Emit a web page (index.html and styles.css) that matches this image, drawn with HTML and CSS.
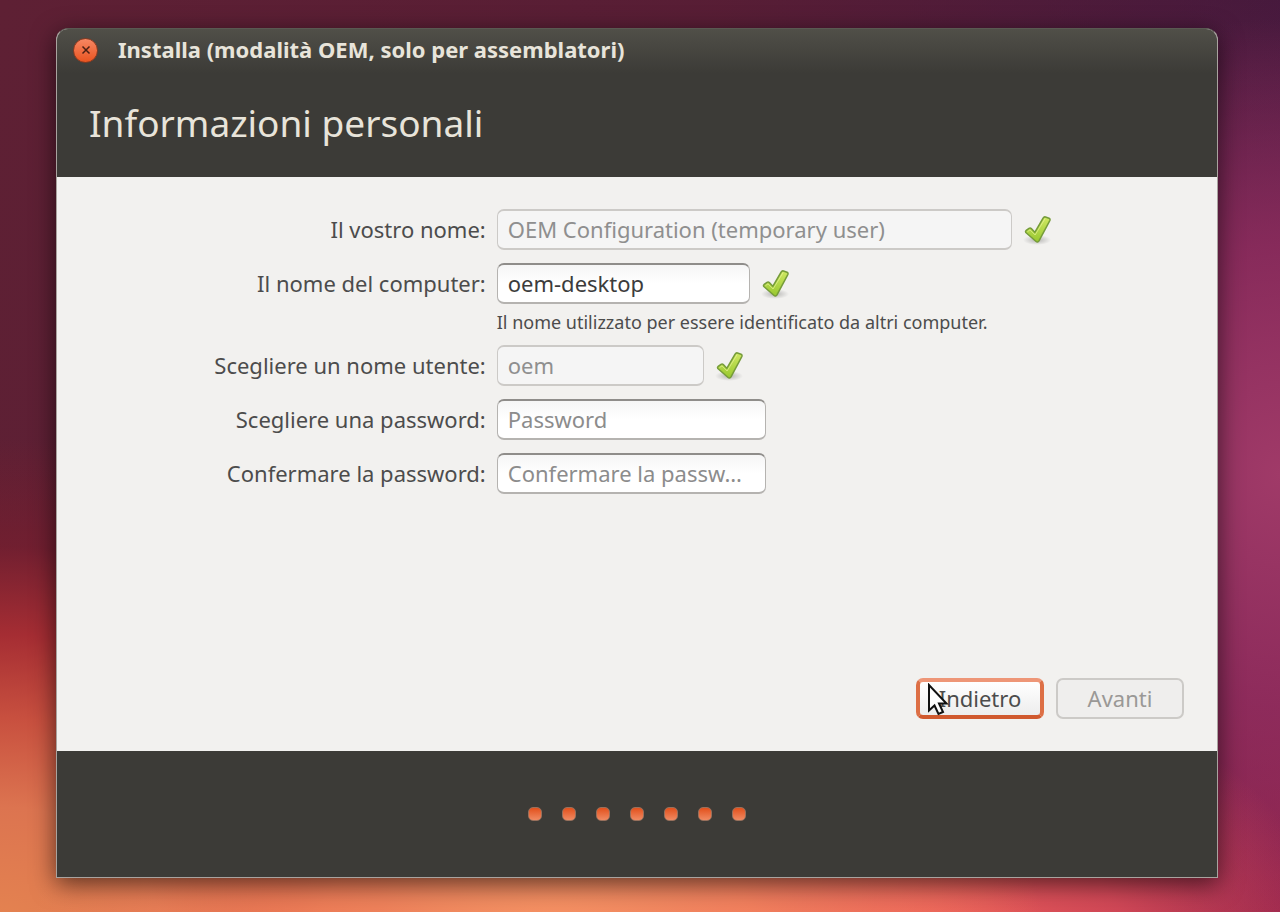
FILE: index.html
```html
<!DOCTYPE html>
<html lang="it">
<head>
    <meta charset="UTF-8">
    <meta name="viewport" content="width=device-width, initial-scale=1.0">
    <title>Installa</title>
    <link rel="stylesheet" href="styles.css">
</head>
<body>
    <!-- shared check mark -->
    <svg class="defs" width="0" height="0" aria-hidden="true">
        <defs>
            <linearGradient id="checkFill" x1="0" y1="0" x2="0" y2="1">
                <stop offset="0" stop-color="#d0e864"/>
                <stop offset="1" stop-color="#98c82e"/>
            </linearGradient>
            <radialGradient id="checkShadow">
                <stop offset="0" stop-color="#000" stop-opacity="0.25"/>
                <stop offset="1" stop-color="#000" stop-opacity="0"/>
            </radialGradient>
            <symbol id="check" viewBox="0 0 32 32">
                <ellipse cx="15" cy="26" rx="14" ry="5" fill="url(#checkShadow)"/>
                <path d="M3.800 18.500 Q3 17.300 4.200 16.300 L7 14.300 Q8.300 13.500 9.300 14.600 L12.800 18.300 L21.200 4 Q22 2.500 23.500 3 L27 4.300 Q28.600 5 27.800 6.600 L17 26.800 Q15.700 29 13.800 27.300 Z" fill="url(#checkFill)" stroke="#769c3a" stroke-width="1.500" stroke-linejoin="round"/>
                <path d="M5.500 17.600 L8 15.900 L13.100 21 L23 4.700" fill="none" stroke="#eef6a4" stroke-width="1" opacity="0.6"/>
            </symbol>
        </defs>
    </svg>

    <main class="window">
        <header class="window-header">
            <div class="titlebar">
                <button type="button" class="close-button" aria-label="Chiudi">
                    <svg width="10" height="10" viewBox="0 0 10 10">
                        <path d="M1.500 1.500 L8.500 8.500 M8.500 1.500 L1.500 8.500" stroke="#4b2014" stroke-width="1.500"/>
                    </svg>
                </button>
                <span class="window-title">Installa (modalità OEM, solo per assemblatori)</span>
            </div>
            <h1>Informazioni personali</h1>
        </header>

        <form class="content">
            <div class="fields">
                <label for="fullname">Il vostro nome:</label>
                <div class="field">
                    <input type="text" id="fullname" class="input-wide" value="OEM Configuration (temporary user)" disabled>
                    <svg class="check"><use href="#check"/></svg>
                </div>

                <label for="hostname">Il nome del computer:</label>
                <div class="field">
                    <input type="text" id="hostname" class="input-host" value="oem-desktop">
                    <svg class="check"><use href="#check"/></svg>
                    <p class="hint">Il nome utilizzato per essere identificato da altri computer.</p>
                </div>

                <label for="username">Scegliere un nome utente:</label>
                <div class="field">
                    <input type="text" id="username" class="input-user" value="oem" disabled>
                    <svg class="check"><use href="#check"/></svg>
                </div>

                <label for="password">Scegliere una password:</label>
                <div class="field">
                    <input type="password" id="password" class="input-password" placeholder="Password">
                </div>

                <label for="verify">Confermare la password:</label>
                <div class="field">
                    <input type="password" id="verify" class="input-password" placeholder="Confermare la passw…">
                </div>
            </div>

            <div class="actions">
                <button type="button" class="btn btn-focus">Indietro
                    <svg class="pointer" width="22" height="34" viewBox="0 0 22 34">
                        <path d="M2 2 V27.500 L7.500 22.500 L11.500 31 L16 29 L12 20.500 H19.500 Z" fill="#fff" stroke="#111" stroke-width="2"/>
                    </svg>
                </button>
                <button type="button" class="btn" disabled>Avanti</button>
            </div>
        </form>

        <footer class="progress">
            <span class="dot"></span>
            <span class="dot"></span>
            <span class="dot"></span>
            <span class="dot"></span>
            <span class="dot"></span>
            <span class="dot"></span>
            <span class="dot"></span>
        </footer>
    </main>
</body>
</html>
```

FILE: styles.css
```css
* {
    box-sizing: border-box;
}

body {
    display: flex;
    min-height: 100vh;
    margin: 0;
    padding: 28px 62px 34px 56px;
    font-family: "Noto Sans", sans-serif;
    font-size: 22px;
    color: #4c4c4c;
    background:
        radial-gradient(ellipse 40% 40% at 42% 106%, #ff9c68 0%, rgba(250, 140, 95, 0.8) 45%, rgba(230, 100, 80, 0) 100%),
        radial-gradient(ellipse 32% 30% at 72% 104%, #f0605a 0%, rgba(225, 80, 90, 0.8) 50%, rgba(170, 45, 85, 0) 100%),
        radial-gradient(ellipse 50% 54% at 0% 102%, #e58450 0%, #dc7450 25%, #c8503f 43%, #a52d33 60%, rgba(125, 30, 45, 0.6) 78%, rgba(95, 28, 45, 0) 100%),
        radial-gradient(ellipse 30% 50% at 100% 52%, #a03a68 0%, rgba(145, 45, 95, 0.8) 50%, rgba(110, 35, 85, 0) 100%),
        linear-gradient(100deg, #5e2034 0%, rgba(90, 30, 52, 0.9) 50%, rgba(60, 22, 60, 0) 100%),
        linear-gradient(#42183f, #6b2452 40%, #96244c 100%);
}

.defs {
    position: absolute;
}

.window {
    flex: 1;
    display: flex;
    flex-direction: column;
    border: 1px solid #a9a39f;
    border-top-color: #5a5952;
    border-radius: 12px 12px 0 0;
    background: #f2f1ef;
    box-shadow: 0 6px 24px rgba(0, 0, 0, 0.6);
    overflow: hidden;
}

.window-header {
    height: 148px;
    color: #e8e4da;
    background: linear-gradient(#504f48, #3c3b37 44px);
}

.titlebar {
    display: flex;
    align-items: center;
    gap: 20px;
    height: 42px;
    padding: 0 16px;
}

.close-button {
    display: flex;
    align-items: center;
    justify-content: center;
    width: 25px;
    height: 25px;
    padding: 0;
    border: 1px solid #8a3a20;
    border-radius: 50%;
    background: linear-gradient(#f68763, #ea5420);
}

.window-title {
    padding-bottom: 2px;
    font-size: 22px;
    font-weight: bold;
}

h1 {
    margin: 0;
    padding: 26px 32px;
    font-size: 37px;
    font-weight: normal;
    line-height: 52px;
}

.content {
    flex: 1;
    display: flex;
    flex-direction: column;
    justify-content: space-between;
    padding: 32px 33px 32px 36px;
}

.fields {
    display: grid;
    grid-template-columns: 36% 1fr;
    gap: 13px 11px;
}

.fields label {
    line-height: 41px;
    text-align: right;
}

.field {
    display: flex;
    flex-wrap: wrap;
    align-items: center;
    column-gap: 10px;
}

input {
    height: 41px;
    padding: 0 10px 2px;
    border: 1px solid #b5b3b0;
    border-top: 2px solid #8f8d8a;
    border-bottom-width: 2px;
    border-radius: 7px;
    font: inherit;
    color: #3c3c3c;
    background: linear-gradient(#f6f6f6, #fff 50%);
}

input::placeholder {
    color: #8c8c8c;
    opacity: 1;
}

input:disabled {
    border-color: #cccac7;
    color: #8f8f8f;
    background: #f5f5f5;
}

.input-wide {
    width: 515px;
}

.input-host {
    width: 253px;
}

.input-user {
    width: 207px;
}

.input-password {
    width: 269px;
}

.check {
    width: 32px;
    height: 32px;
}

.hint {
    width: 100%;
    margin: 8px 0 0;
    font-size: 18px;
    line-height: 20px;
}

.actions {
    display: flex;
    justify-content: flex-end;
    gap: 12px;
}

.btn {
    position: relative;
    width: 128px;
    height: 41px;
    padding: 0 0 2px;
    border: 2px solid #cccac7;
    border-radius: 7px;
    font: inherit;
    color: #4c4c4c;
    background: #efeeed;
}

.btn:disabled {
    color: #9a9896;
}

.btn-focus {
    border: 4px solid #dd6f45;
    border-top-color: #ee9677;
    border-bottom-color: #d0592e;
    background: linear-gradient(#fff, #ededed);
}

.pointer {
    position: absolute;
    top: 1px;
    left: 7px;
}

.progress {
    display: flex;
    align-items: center;
    justify-content: center;
    gap: 20px;
    height: 126px;
    background: #3c3b37;
}

.dot {
    width: 14px;
    height: 14px;
    border: 1px solid #98705c;
    border-radius: 5px;
    background: linear-gradient(#e2501c, #f08a62);
}
```
